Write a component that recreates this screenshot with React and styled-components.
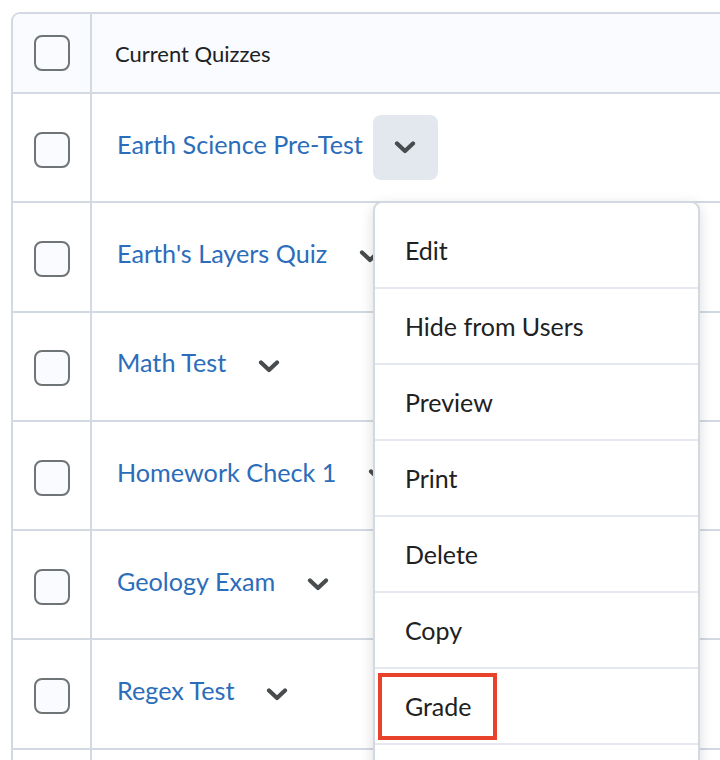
import React from "react";
import styled, { createGlobalStyle } from "styled-components";

const Global = createGlobalStyle`
  html, body { margin: 0; padding: 0; background: #fff; overflow: hidden; }
  body { font-family: Lato, "Noto Sans", sans-serif; width: 720px; height: 760px; }
`;

const Page = styled.div`
  padding: 12px 0 0 11px;
  position: relative;
`;

const Table = styled.div`
  width: 780px;
  border-top: 2px solid #d3d9e2;
  border-left: 2px solid #d3d9e2;
  border-top-left-radius: 9px;
`;

const Row = styled.div`
  display: grid;
  grid-template-columns: 79px 1fr;
  height: ${(p) => (p.$header ? "78px" : "109.3px")};
  box-sizing: border-box;
  border-top: ${(p) => (p.$header ? "none" : "2px solid #d3d9e2")};
  background: ${(p) => (p.$header ? "#f9fbff" : "#fff")};
  border-top-left-radius: ${(p) => (p.$header ? "7px" : "0")};
`;

const CheckCell = styled.div`
  border-right: 2px solid #d3d9e2;
  display: flex;
  align-items: center;
  justify-content: center;
`;

const Checkbox = styled.div`
  width: 36px;
  height: 36px;
  box-sizing: border-box;
  border: 2px solid #6f7477;
  border-radius: 8px;
  background: #f9fbff;
  margin-top: ${(p) => (p.$header ? "0" : "4px")};
`;

const NameCell = styled.div`
  display: flex;
  align-items: center;
  padding-left: ${(p) => (p.$header ? "23px" : "25px")};
`;

const HeaderText = styled.span`
  font-size: 22px;
  color: #202122;
`;

const Link = styled.span`
  font-size: 25.2px;
  color: #2b6dba;
  margin-bottom: 8px;
`;

const ActionWrap = styled.div`
  position: relative;
  margin-left: 10px;
`;

const ActionButton = styled.div`
  width: 65px;
  height: 65px;
  border-radius: 8px;
  background: ${(p) => (p.$active ? "#e3e8ef" : "transparent")};
  display: flex;
  align-items: center;
  justify-content: center;
`;

const Menu = styled.div`
  position: absolute;
  top: 86px;
  left: 0;
  width: 327px;
  box-sizing: border-box;
  background: #fff;
  border: 2px solid #d3d9e2;
  border-radius: 9px;
  box-shadow: 0 4px 14px rgba(0, 0, 0, 0.14);
  padding-top: 10px;
  z-index: 5;
`;

const MenuItem = styled.div`
  position: relative;
  height: 76px;
  box-sizing: border-box;
  display: flex;
  align-items: center;
  padding-left: 30px;
  font-size: 25px;
  color: #202122;
  border-bottom: ${(p) => (p.$last ? "none" : "2px solid #e5e9ef")};
`;

const Highlight = styled.div`
  position: absolute;
  left: 3px;
  top: 4px;
  width: 119px;
  height: 67px;
  box-sizing: border-box;
  border: 4px solid #e8422a;
`;

const Chevron = () => (
  <svg width="22" height="13" viewBox="0 0 22 13">
    <polyline
      points="3,2.5 11,10 19,2.5"
      fill="none"
      stroke="#494c4e"
      strokeWidth="4.2"
      strokeLinecap="round"
      strokeLinejoin="round"
    />
  </svg>
);

const quizzes = [
  "Earth Science Pre-Test",
  "Earth's Layers Quiz",
  "Math Test",
  "Homework Check 1",
  "Geology Exam",
  "Regex Test",
  "",
];

const menuItems = ["Edit", "Hide from Users", "Preview", "Print", "Delete", "Copy", "Grade", ""];

export default function App() {
  return (
    <>
      <Global />
      <Page>
        <Table>
          <Row $header>
            <CheckCell>
              <Checkbox $header />
            </CheckCell>
            <NameCell $header>
              <HeaderText>Current Quizzes</HeaderText>
            </NameCell>
          </Row>
          {quizzes.map((q, i) => (
            <Row key={i}>
              <CheckCell>
                <Checkbox />
              </CheckCell>
              <NameCell>
                {q && <Link>{q}</Link>}
                {q && (
                  <ActionWrap>
                    <ActionButton $active={i === 0}>
                      <Chevron />
                    </ActionButton>
                    {i === 0 && (
                      <Menu>
                        {menuItems.map((m, j) => (
                          <MenuItem key={j} $last={j === menuItems.length - 1}>
                            {m === "Grade" && <Highlight />}
                            {m}
                          </MenuItem>
                        ))}
                      </Menu>
                    )}
                  </ActionWrap>
                )}
              </NameCell>
            </Row>
          ))}
        </Table>
      </Page>
    </>
  );
}
